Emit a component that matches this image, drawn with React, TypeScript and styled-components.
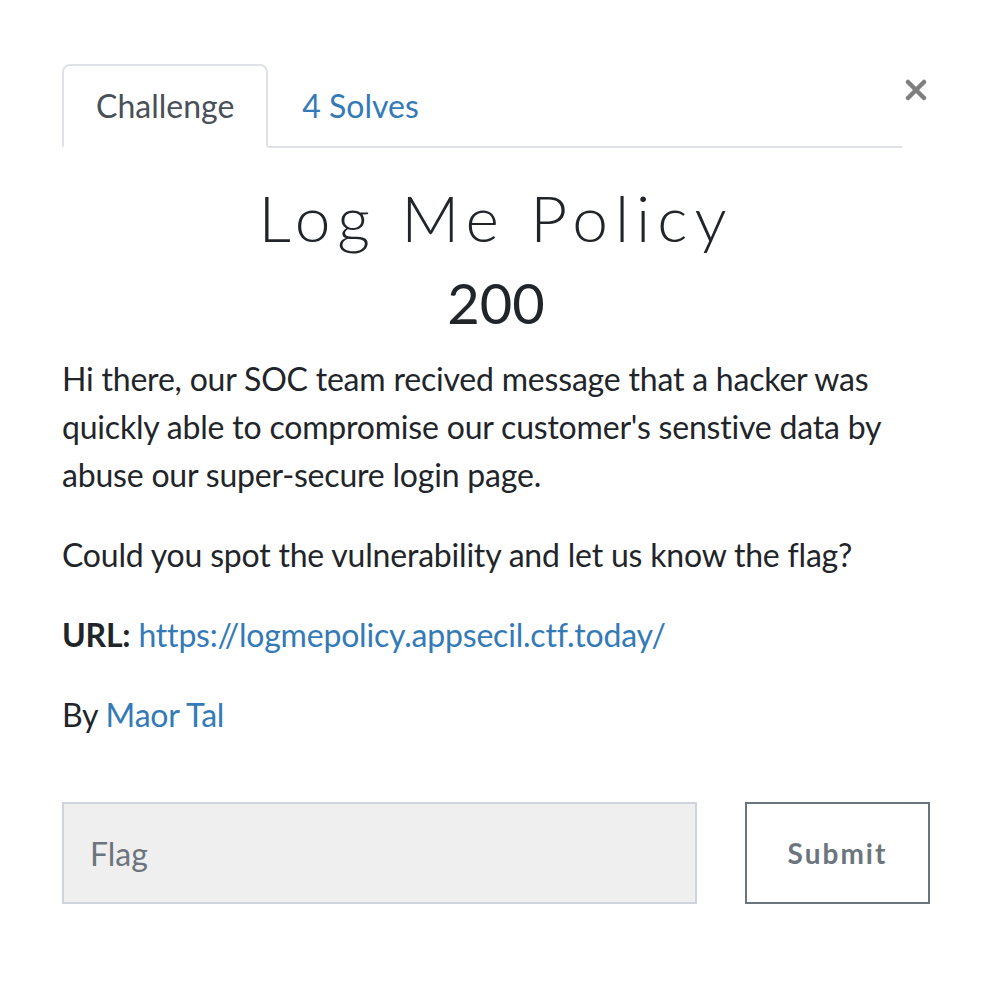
import React from "react";
import styled, { createGlobalStyle } from "styled-components";

const Global = createGlobalStyle`
  html, body { margin: 0; padding: 0; background: #fff; }
  body { font-family: Lato, "Noto Sans", sans-serif; color: #212529; }
  * { box-sizing: border-box; }
`;

const Modal = styled.div`
  width: 994px;
  padding: 64px 64px 0 62px;
`;

const Header = styled.div`
  display: flex;
  align-items: flex-start;
`;

const Tabs = styled.ul`
  flex: 1;
  display: flex;
  list-style: none;
  margin: 0;
  padding: 0;
  border-bottom: 2px solid #dee2e6;
`;

const Tab = styled.li<{ $active?: boolean }>`
  margin-bottom: -2px;
  padding: 16px 32px;
  font-size: 32px;
  line-height: 48px;
  border: 2px solid ${(p) => (p.$active ? "#dee2e6" : "transparent")};
  border-bottom-color: ${(p) => (p.$active ? "#fff" : "transparent")};
  border-radius: 8px 8px 0 0;
  background: ${(p) => (p.$active ? "#fff" : "transparent")};
  color: ${(p) => (p.$active ? "#495057" : "#337ab7")};
`;

const Close = styled.button`
  width: 28px;
  margin-top: 15px;
  padding: 0;
  border: 0;
  background: none;
  display: flex;
  justify-content: center;
  cursor: pointer;
`;

const Title = styled.h2`
  margin: 32px 0 0;
  text-align: center;
  font-family: Lato, sans-serif;
  font-weight: 300;
  font-size: 64px;
  line-height: 76px;
  letter-spacing: 7px;
  color: #212529;
`;

const Points = styled.h3`
  margin: 13px 0 19px;
  text-align: center;
  font-weight: 400;
  font-size: 56px;
  line-height: 67px;
  color: #212529;
`;

const Para = styled.p`
  margin: 0 0 32px;
  font-size: 32px;
  line-height: 48px;
  letter-spacing: -0.2px;
  color: #212529;
`;

const Link = styled.a`
  color: #337ab7;
  text-decoration: none;
`;

const Form = styled.div`
  display: flex;
  gap: 48px;
  margin-top: 63px;
`;

const Input = styled.input`
  flex: 1;
  height: 102px;
  padding: 0 26px;
  font-family: Lato, sans-serif;
  font-size: 32px;
  background: #efefef;
  border: 2px solid #ced4da;
  border-radius: 0;
  outline: none;
  &::placeholder { color: #6c757d; }
`;

const Submit = styled.button`
  width: 185px;
  height: 102px;
  background: #fff;
  border: 2px solid #6c757d;
  border-radius: 0;
  color: #6c757d;
  font-family: Lato, sans-serif;
  font-weight: 700;
  font-size: 28px;
  letter-spacing: 2px;
`;

export default function App() {
  return (
    <>
      <Global />
      <Modal>
        <Header>
          <Tabs>
            <Tab $active>Challenge</Tab>
            <Tab>4 Solves</Tab>
          </Tabs>
          <Close aria-label="Close">
            <svg width="22" height="22" viewBox="0 0 22 22">
              <path d="M3 3 L19 19 M19 3 L3 19" stroke="#7f7f7f" strokeWidth="4.5" strokeLinecap="round" />
            </svg>
          </Close>
        </Header>
        <Title>Log Me Policy</Title>
        <Points>200</Points>
        <Para>
          Hi there, our SOC team recived message that a hacker was quickly able to compromise our customer's senstive data by abuse our super-secure login page.
        </Para>
        <Para>Could you spot the vulnerability and let us know the flag?</Para>
        <Para>
          <b>URL:</b> <Link href="#">https://logmepolicy.appsecil.ctf.today/</Link>
        </Para>
        <Para>
          By <Link href="#">Maor Tal</Link>
        </Para>
        <Form>
          <Input placeholder="Flag" />
          <Submit>Submit</Submit>
        </Form>
      </Modal>
    </>
  );
}
